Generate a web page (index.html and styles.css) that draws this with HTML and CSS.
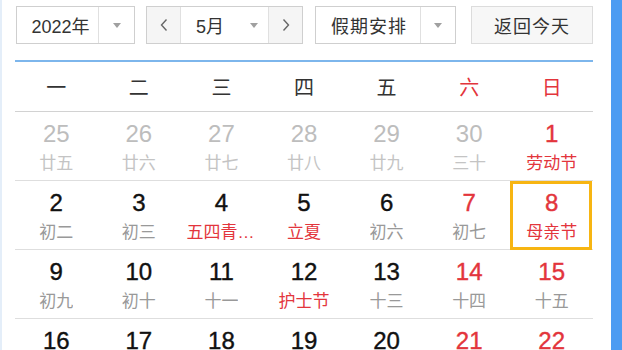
FILE: index.html
```html
<!DOCTYPE html>
<html lang="zh-CN">
  <head>
    <meta charset="UTF-8">
    <meta name="viewport" content="width=device-width, initial-scale=1.0">
    <title>万年历</title>
    <link rel="stylesheet" href="styles.css">
  </head>
  <body>
    <div class="app">
      <div class="panel">
        <div class="toolbar">
          <div class="select year">
            <span class="select-text">2022年</span>
            <span class="select-arrow"></span>
          </div>
          <div class="month-group">
            <button type="button" class="nav">
              <svg width="10" height="14" viewBox="0 0 10 14"><polyline points="7.5,1.5 2.5,7 7.5,12.5" fill="none" stroke="#666" stroke-width="1.4"/></svg>
            </button>
            <div class="month">
              <span class="month-text">5月</span>
              <span class="select-arrow"></span>
            </div>
            <button type="button" class="nav">
              <svg width="10" height="14" viewBox="0 0 10 14"><polyline points="2.5,1.5 7.5,7 2.5,12.5" fill="none" stroke="#666" stroke-width="1.4"/></svg>
            </button>
          </div>
          <div class="select holiday">
            <span class="select-text">假期安排</span>
            <span class="select-arrow"></span>
          </div>
          <button type="button" class="today-btn">返回今天</button>
        </div>

        <div class="week">
          <span>一</span><span>二</span><span>三</span><span>四</span><span>五</span>
          <span class="weekend">六</span><span class="weekend">日</span>
        </div>

        <div class="days">
          <div class="day other"><span class="num">25</span><span class="lunar">廿五</span></div>
          <div class="day other"><span class="num">26</span><span class="lunar">廿六</span></div>
          <div class="day other"><span class="num">27</span><span class="lunar">廿七</span></div>
          <div class="day other"><span class="num">28</span><span class="lunar">廿八</span></div>
          <div class="day other"><span class="num">29</span><span class="lunar">廿九</span></div>
          <div class="day other"><span class="num">30</span><span class="lunar">三十</span></div>
          <div class="day weekend"><span class="num">1</span><span class="lunar festival">劳动节</span></div>

          <div class="day"><span class="num">2</span><span class="lunar">初二</span></div>
          <div class="day"><span class="num">3</span><span class="lunar">初三</span></div>
          <div class="day"><span class="num">4</span><span class="lunar festival">五四青年节</span></div>
          <div class="day"><span class="num">5</span><span class="lunar festival">立夏</span></div>
          <div class="day"><span class="num">6</span><span class="lunar">初六</span></div>
          <div class="day weekend"><span class="num">7</span><span class="lunar">初七</span></div>
          <div class="day weekend today"><span class="num">8</span><span class="lunar festival">母亲节</span></div>

          <div class="day"><span class="num">9</span><span class="lunar">初九</span></div>
          <div class="day"><span class="num">10</span><span class="lunar">初十</span></div>
          <div class="day"><span class="num">11</span><span class="lunar">十一</span></div>
          <div class="day"><span class="num">12</span><span class="lunar festival">护士节</span></div>
          <div class="day"><span class="num">13</span><span class="lunar">十三</span></div>
          <div class="day weekend"><span class="num">14</span><span class="lunar">十四</span></div>
          <div class="day weekend"><span class="num">15</span><span class="lunar">十五</span></div>

          <div class="day"><span class="num">16</span><span class="lunar">十六</span></div>
          <div class="day"><span class="num">17</span><span class="lunar">十七</span></div>
          <div class="day"><span class="num">18</span><span class="lunar">十八</span></div>
          <div class="day"><span class="num">19</span><span class="lunar">十九</span></div>
          <div class="day"><span class="num">20</span><span class="lunar">二十</span></div>
          <div class="day weekend"><span class="num">21</span><span class="lunar festival">小满</span></div>
          <div class="day weekend"><span class="num">22</span><span class="lunar">廿二</span></div>
        </div>
      </div>
      <div class="side"></div>
    </div>
  </body>
</html>
```

FILE: styles.css
```css
body {
  margin: 0;
  font-family: "Liberation Sans", "Noto Sans CJK SC", sans-serif;
  background-color: #fff;
}

.app {
  display: flex;
  min-height: 100vh;
}

.panel {
  width: 611px;
  box-sizing: border-box;
  border-left: 2px solid #e4eef9;
  padding: 6px 18px 0 13px;
}

.side {
  flex: 1;
  background-color: #4d9cf2;
}

/* toolbar */
.toolbar {
  display: flex;
  height: 38px;
  padding-left: 1px;
}

.select {
  display: flex;
  box-sizing: border-box;
  height: 38px;
  border: 1px solid #cfcfcf;
  background-color: #fff;
}

.year {
  width: 119px;
}

.year .select-text {
  padding-left: 6px;
}

.holiday {
  width: 141px;
  margin-left: 12px;
}

.select-text {
  flex: 1;
  display: flex;
  align-items: center;
  justify-content: center;
  font-size: 18px;
  color: #333;
  border-right: 1px solid #e0e0e0;
}

.holiday .select-text {
  letter-spacing: 1px;
  padding-left: 2px;
}

.select-arrow {
  width: 35px;
  display: flex;
  align-items: center;
  justify-content: center;
}

.holiday .select-arrow {
  width: 34px;
}

.select-arrow::before {
  content: "";
  border-left: 4px solid transparent;
  border-right: 4px solid transparent;
  border-top: 5px solid #a0a0a0;
}

.month-group {
  display: flex;
  box-sizing: border-box;
  width: 157px;
  height: 38px;
  margin-left: 11px;
  border: 1px solid #cfcfcf;
}

.nav {
  width: 34px;
  padding: 0;
  border: none;
  background-color: #f5f5f5;
  display: flex;
  align-items: center;
  justify-content: center;
}

.nav:first-child {
  border-right: 1px solid #e0e0e0;
}

.nav:last-child {
  border-left: 1px solid #e0e0e0;
}

.month {
  flex: 1;
  display: flex;
  background-color: #fff;
}

.month-text {
  flex: 1;
  display: flex;
  align-items: center;
  justify-content: center;
  font-size: 18px;
  color: #333;
}

.month .select-arrow {
  width: 29px;
}

.today-btn {
  width: 122px;
  height: 38px;
  margin-left: 15px;
  padding: 0;
  border: 1px solid #dcdcdc;
  background-color: #f7f7f7;
  font-family: inherit;
  font-size: 18px;
  letter-spacing: 1px;
  color: #333;
}

/* week header */
.week {
  display: grid;
  grid-template-columns: repeat(7, 1fr);
  margin-top: 16px;
  border-top: 2px solid #7db6ec;
  border-bottom: 1px solid #d2d2d2;
  height: 49px;
  align-items: center;
}

.week span {
  text-align: center;
  font-size: 20px;
  color: #333;
}

.week .weekend {
  color: #e3353c;
}

/* days */
.days {
  display: grid;
  grid-template-columns: repeat(7, 1fr);
}

.day {
  position: relative;
  box-sizing: border-box;
  height: 69px;
  padding-top: 9px;
  border-bottom: 1px solid #dedede;
  display: flex;
  flex-direction: column;
  align-items: center;
}

.num {
  font-size: 24px;
  line-height: 26px;
  color: #111;
  -webkit-text-stroke: 0.4px currentColor;
}

.lunar {
  max-width: 70px;
  margin-top: 7px;
  font-size: 17px;
  line-height: 20px;
  color: #999;
  white-space: nowrap;
  overflow: hidden;
  text-overflow: ellipsis;
}

.weekend .num,
.lunar.festival {
  color: #e3353c;
}

.other .num {
  color: #bdbdbd;
  -webkit-text-stroke: 0;
}

.other .lunar {
  color: #c4c4c4;
}

.today::after {
  content: "";
  position: absolute;
  top: 0;
  left: 0;
  right: 1px;
  bottom: -1px;
  border: 3px solid #f7b512;
}
```
